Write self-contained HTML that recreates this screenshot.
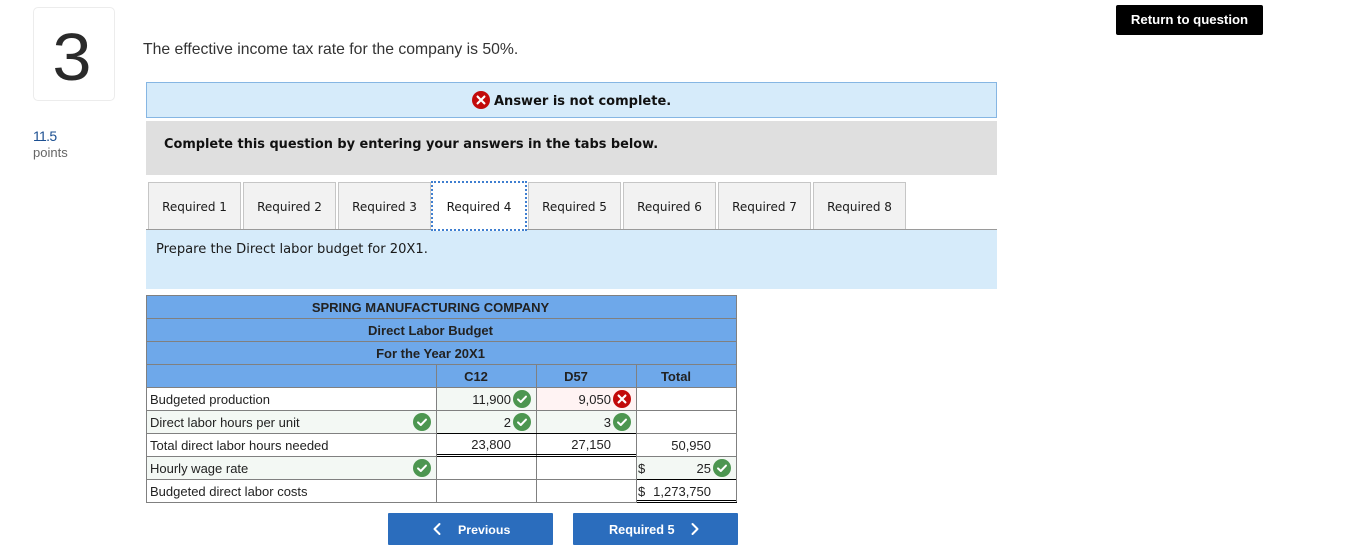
<!DOCTYPE html>
<html><head><meta charset="utf-8">
<style>
html,body{margin:0;padding:0;background:#fff;width:1372px;height:548px;overflow:hidden}
body{position:relative;font-family:"Liberation Sans",sans-serif}
.a{position:absolute;white-space:nowrap}
.v{font-family:"DejaVu Sans",sans-serif}
.tab{position:absolute;top:182px;width:91px;height:46px;background:#f2f2f2;border:1px solid #c6c6c6;border-bottom:0;font:12px/48px "DejaVu Sans",sans-serif;color:#1a1a1a;text-align:center}
.h{position:absolute;height:1px;background:#808080}
.w{position:absolute;width:1px;background:#808080}
.b{position:absolute;background:#6ea8ea}
.g{position:absolute;background:#f3f8f4}
.t{position:absolute;white-space:nowrap;font-size:13px;line-height:16px;color:#222}
.r{text-align:right}
.bh{font-weight:bold;text-align:center}
.k{position:absolute;height:1px;background:#000}
svg.i{position:absolute;width:18px;height:18px}
</style></head><body>

<div class="a" style="left:33px;top:7px;width:80px;height:92px;border:1px solid #ececec;border-radius:5px"></div>
<div class="a" style="left:32px;top:20px;width:80px;text-align:center;font-size:67px;line-height:76px;color:#2a2a2a;transform:scaleX(1.05)">3</div>
<div class="a" style="left:33px;top:127px;font-size:14px;line-height:18px;color:#1b4f91;letter-spacing:-.7px">11.5</div>
<div class="a" style="left:33px;top:145px;font-size:13px;line-height:16px;color:#666">points</div>
<div class="a" style="left:143px;top:41px;font-size:15.75px;line-height:18px;color:#333">The effective income tax rate for the company is 50%.</div>

<div class="a" style="left:1116px;top:5px;width:147px;height:30px;background:#000;border-radius:2px;color:#fff;font-weight:bold;font-size:13.2px;line-height:30px;text-align:center">Return to question</div>

<div class="a" style="left:146px;top:82px;width:849px;height:34px;background:#d6ebfa;border:1px solid #86b6e3"></div>
<svg class="i" style="left:472px;top:91px" viewBox="0 0 18 18"><circle cx="9" cy="9" r="9" fill="#c20a0a"/><path d="M5.6 5.6L12.4 12.4M12.4 5.6L5.6 12.4" stroke="#fff" stroke-width="2.2" stroke-linecap="round"/></svg>
<div class="a v" style="left:494px;top:92.5px;font-size:13px;line-height:18px;font-weight:bold;color:#111">Answer is not complete.</div>

<div class="a" style="left:146px;top:121px;width:851px;height:54px;background:#dfdfdf"></div>
<div class="a v" style="left:164px;top:136px;font-size:12.9px;line-height:18px;font-weight:bold;color:#111">Complete this question by entering your answers in the tabs below.</div>

<div class="a" style="left:146px;top:229px;width:851px;height:60px;background:#d6ebfa"></div>
<div class="a" style="left:146px;top:229px;width:851px;height:1px;background:#9a9a9a"></div>
<div class="tab" style="left:148px">Required 1</div>
<div class="tab" style="left:243px">Required 2</div>
<div class="tab" style="left:338px">Required 3</div>
<div class="tab" style="left:528px">Required 5</div>
<div class="tab" style="left:623px">Required 6</div>
<div class="tab" style="left:718px">Required 7</div>
<div class="tab" style="left:813px">Required 8</div>
<div class="a" style="left:431px;top:181px;width:92px;height:46px;background:#fff;border:2px dotted #3f7fd0;font:12px/48px 'DejaVu Sans',sans-serif;color:#1a1a1a;text-align:center">Required 4</div>
<div class="a v" style="left:156px;top:242px;font-size:13.1px;line-height:16px;color:#1a1a1a">Prepare the Direct labor budget for 20X1.</div>

<!-- table backgrounds -->
<div class="b" style="left:146px;top:295px;width:591px;height:93px"></div>
<div class="g" style="left:147px;top:411px;width:289px;height:22px"></div>
<div class="g" style="left:147px;top:457px;width:289px;height:22px"></div>
<div class="g" style="left:437px;top:388px;width:99px;height:45px"></div>
<div class="a" style="left:537px;top:388px;width:99px;height:22px;background:#fff3f3"></div>
<div class="g" style="left:537px;top:411px;width:99px;height:22px"></div>
<div class="g" style="left:637px;top:457px;width:99px;height:22px"></div>

<!-- horizontal lines -->
<div class="h" style="left:146px;top:295px;width:591px"></div>
<div class="h" style="left:146px;top:318px;width:591px"></div>
<div class="h" style="left:146px;top:341px;width:591px"></div>
<div class="h" style="left:146px;top:364px;width:591px"></div>
<div class="h" style="left:146px;top:387px;width:591px"></div>
<div class="h" style="left:146px;top:410px;width:591px"></div>
<div class="h" style="left:146px;top:433px;width:591px"></div>
<div class="h" style="left:146px;top:456px;width:591px"></div>
<div class="h" style="left:146px;top:479px;width:591px"></div>
<div class="h" style="left:146px;top:502px;width:591px"></div>
<!-- vertical lines -->
<div class="w" style="left:146px;top:295px;height:208px"></div>
<div class="w" style="left:736px;top:295px;height:208px"></div>
<div class="w" style="left:436px;top:364px;height:139px"></div>
<div class="w" style="left:536px;top:364px;height:139px"></div>
<div class="w" style="left:636px;top:364px;height:139px"></div>
<!-- black rules -->
<div class="k" style="left:437px;top:433px;width:199px"></div>
<div class="k" style="left:437px;top:454px;width:199px"></div>
<div class="k" style="left:437px;top:456px;width:199px"></div>
<div class="k" style="left:637px;top:479px;width:99px"></div>
<div class="k" style="left:637px;top:500px;width:99px"></div>
<div class="k" style="left:637px;top:502px;width:100px"></div>

<!-- header text -->
<div class="t bh" style="left:146px;top:300px;width:569px">SPRING MANUFACTURING COMPANY</div>
<div class="t bh" style="left:146px;top:323px;width:569px">Direct Labor Budget</div>
<div class="t bh" style="left:146px;top:346px;width:569px">For the Year 20X1</div>
<div class="t bh" style="left:426px;top:369px;width:100px">C12</div>
<div class="t bh" style="left:526px;top:369px;width:100px">D57</div>
<div class="t bh" style="left:626px;top:369px;width:100px">Total</div>

<!-- labels -->
<div class="t" style="left:150px;top:392px">Budgeted production</div>
<div class="t" style="left:150px;top:415px">Direct labor hours per unit</div>
<div class="t" style="left:150px;top:438px">Total direct labor hours needed</div>
<div class="t" style="left:150px;top:461px">Hourly wage rate</div>
<div class="t" style="left:150px;top:484px">Budgeted direct labor costs</div>

<!-- values -->
<div class="t r" style="left:437px;top:392px;width:74px">11,900</div>
<div class="t r" style="left:537px;top:392px;width:74px">9,050</div>
<div class="t r" style="left:437px;top:415px;width:74px">2</div>
<div class="t r" style="left:537px;top:415px;width:74px">3</div>
<div class="t r" style="left:437px;top:437px;width:74px">23,800</div>
<div class="t r" style="left:537px;top:437px;width:74px">27,150</div>
<div class="t r" style="left:637px;top:438px;width:74px">50,950</div>
<div class="t" style="left:638px;top:461px">$</div>
<div class="t r" style="left:637px;top:461px;width:74px">25</div>
<div class="t" style="left:638px;top:484px">$</div>
<div class="t r" style="left:637px;top:484px;width:74px">1,273,750</div>

<!-- icons -->
<svg class="i" style="left:413px;top:413px" viewBox="0 0 18 18"><circle cx="9" cy="9" r="9" fill="#4c9650"/><path d="M5 9.4L7.8 12L13 6.6" fill="none" stroke="#fff" stroke-width="2" stroke-linecap="round" stroke-linejoin="round"/></svg>
<svg class="i" style="left:413px;top:459px" viewBox="0 0 18 18"><circle cx="9" cy="9" r="9" fill="#4c9650"/><path d="M5 9.4L7.8 12L13 6.6" fill="none" stroke="#fff" stroke-width="2" stroke-linecap="round" stroke-linejoin="round"/></svg>
<svg class="i" style="left:513px;top:390px" viewBox="0 0 18 18"><circle cx="9" cy="9" r="9" fill="#4c9650"/><path d="M5 9.4L7.8 12L13 6.6" fill="none" stroke="#fff" stroke-width="2" stroke-linecap="round" stroke-linejoin="round"/></svg>
<svg class="i" style="left:513px;top:413px" viewBox="0 0 18 18"><circle cx="9" cy="9" r="9" fill="#4c9650"/><path d="M5 9.4L7.8 12L13 6.6" fill="none" stroke="#fff" stroke-width="2" stroke-linecap="round" stroke-linejoin="round"/></svg>
<svg class="i" style="left:613px;top:390px" viewBox="0 0 18 18"><circle cx="9" cy="9" r="9" fill="#c20a0a"/><path d="M5.6 5.6L12.4 12.4M12.4 5.6L5.6 12.4" stroke="#fff" stroke-width="2.2" stroke-linecap="round"/></svg>
<svg class="i" style="left:613px;top:413px" viewBox="0 0 18 18"><circle cx="9" cy="9" r="9" fill="#4c9650"/><path d="M5 9.4L7.8 12L13 6.6" fill="none" stroke="#fff" stroke-width="2" stroke-linecap="round" stroke-linejoin="round"/></svg>
<svg class="i" style="left:713px;top:459px" viewBox="0 0 18 18"><circle cx="9" cy="9" r="9" fill="#4c9650"/><path d="M5 9.4L7.8 12L13 6.6" fill="none" stroke="#fff" stroke-width="2" stroke-linecap="round" stroke-linejoin="round"/></svg>

<!-- buttons -->
<div class="a" style="left:388px;top:513px;width:165px;height:32px;background:#2b6dbd;border-radius:1px"></div>
<svg class="a" style="left:432px;top:522px" width="10" height="14" viewBox="0 0 10 14"><path d="M7.5 2L2.5 7L7.5 12" fill="none" stroke="#fff" stroke-width="2" stroke-linecap="round" stroke-linejoin="round"/></svg>
<div class="a" style="left:458px;top:522px;font-size:12.4px;line-height:16px;font-weight:bold;color:#fff">Previous</div>
<div class="a" style="left:573px;top:513px;width:165px;height:32px;background:#2b6dbd;border-radius:1px"></div>
<div class="a" style="left:609px;top:522px;font-size:12.7px;line-height:16px;font-weight:bold;color:#fff">Required 5</div>
<svg class="a" style="left:690px;top:522px" width="10" height="14" viewBox="0 0 10 14"><path d="M2.5 2L7.5 7L2.5 12" fill="none" stroke="#fff" stroke-width="2" stroke-linecap="round" stroke-linejoin="round"/></svg>

</body></html>
